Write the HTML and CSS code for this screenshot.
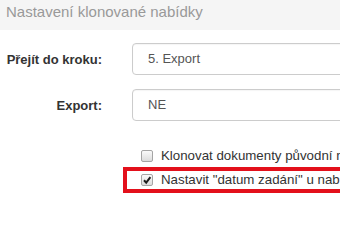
FILE: index.html
```html
<!DOCTYPE html>
<html lang="cs">
<head>
<meta charset="utf-8">
<link rel="stylesheet" href="styles.css">
</head>
<body>
<div class="panel">
  <div class="header">Nastavení klonované nabídky</div>
  <div class="form">
    <div class="label">Přejít do kroku:</div>
    <div class="input">5. Export</div>
    <div class="label">Export:</div>
    <div class="input">NE</div>
  </div>
  <div class="checks">
    <div class="check">
      <span class="cb"></span>
      <span class="text">Klonovat dokumenty původní nabídky</span>
    </div>
    <div class="check highlight">
      <span class="cb"><svg viewBox="0 0 12 12" width="12" height="12"><path d="M3 6.2 L5.2 8.6 L9.4 3.2" fill="none" stroke="#1e1e1e" stroke-width="2"/></svg></span>
      <span class="text">Nastavit "datum zadání" u nabídky</span>
    </div>
  </div>
</div>
</body>
</html>
```

FILE: styles.css
```css
html, body {
  margin: 0;
  padding: 0;
  width: 340px;
  height: 200px;
  overflow: hidden;
  background: #fff;
}
.panel {
  font-family: "Liberation Sans", Arial, sans-serif;
  color: #333;
}
.header {
  height: 28px;
  padding-top: 2px;
  padding-left: 6px;
  background: #f5f5f5;
  color: #999;
  font-size: 15px;
  line-height: 20px;
  white-space: nowrap;
}
.form {
  display: grid;
  grid-template-columns: 102px 260px;
  column-gap: 30px;
  row-gap: 14px;
  margin-top: 13px;
  align-items: center;
}
.label {
  text-align: right;
  font-weight: bold;
  font-size: 13px;
  white-space: nowrap;
}
.input {
  box-sizing: border-box;
  height: 32px;
  border: 1px solid #ccc;
  border-radius: 4px;
  padding-left: 15px;
  font-size: 13px;
  line-height: 30px;
  color: #555;
  box-shadow: inset 0 1px 1px rgba(0,0,0,0.04);
}
.checks {
  margin-top: 24px;
  margin-left: 123px;
}
.check {
  display: flex;
  align-items: center;
  height: 22px;
  padding-left: 18px;
  font-size: 13.3px;
  white-space: nowrap;
}
.check.highlight {
  width: 260px;
  height: 18px;
  border: 4px solid #e3101b;
  padding-left: 14px;
}
.cb {
  box-sizing: border-box;
  width: 12px;
  height: 12px;
  flex: none;
  border: 1px solid #a5a5a5;
  border-radius: 2px;
  background: linear-gradient(#fafafa, #dcdcdc);
  margin-right: 8px;
  display: flex;
  align-items: center;
  justify-content: center;
}
.cb svg {
  display: block;
  margin: -1px;
}
.text {
  line-height: 16px;
}
```
